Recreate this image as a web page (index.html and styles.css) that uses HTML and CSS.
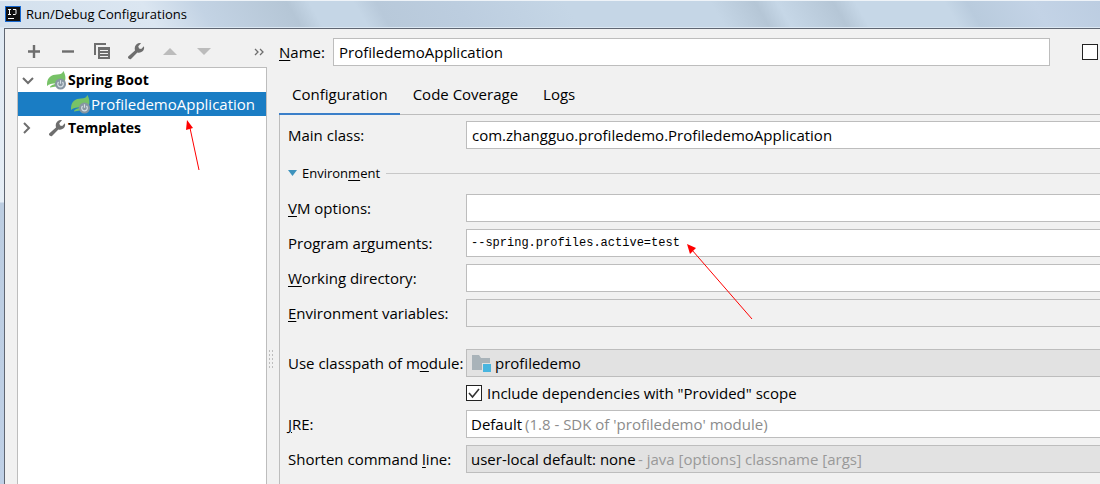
FILE: index.html
```html
<!DOCTYPE html>
<html lang="en">
<head>
<meta charset="utf-8">
<title>Run/Debug Configurations</title>
<link rel="stylesheet" href="styles.css">
</head>
<body>
<svg class="defs" aria-hidden="true">
  <symbol id="wrench" viewBox="0 0 18 18"><path d="M1.2 14.6 8 8.4C7.3 5.800 8 3.600 9.600 2.300 11 1.100 12.600.900 14 1.300L11.300 4.200 12 6.400 14.200 7 16.900 4.200C17.500 6.200 17 8 15.600 9.300 14 10.700 12 10.900 10.400 10.400L4 16.900C2.500 17.900.200 16 1.200 14.600Z" fill="#6e6e6e"/></symbol>
  <symbol id="spring" viewBox="0 0 20 20"><path class="leaf" d="M0 16C-.5 8 4 4.500 10 4.500 13.500 4.500 15.500 3.500 16.500 1 18.500 5 18.800 8 18 11L12 16 3 17.500C3 15.500 6 14.800 9 13.500 5 13.500 2 14 0 16Z"/><circle cx="13.500" cy="14" r="5.500" fill="#8796a1"/><path d="M11.600 12a2.800 2.800 0 1 0 3.800 0M13.500 10.300v3.400" fill="none" stroke="#d4dde3" stroke-width="1.200"/></symbol>
</svg>
<header class="titlebar">
  <svg class="app-icon" width="16" height="16" viewBox="0 0 16 16" aria-hidden="true"><rect x=".5" y=".5" width="15" height="15" fill="#111" stroke="#1769d2"/><path d="M3 3.500h3M4.500 3.500v5M3 8.500h3M8 3.500h3v4q0 1-1 1H8M3 12.500h6" fill="none" stroke="#fff"/></svg>
  <h1 class="title">Run/Debug Configurations</h1>
</header>
<main class="frame">
  <aside class="sidebar">
    <div class="toolbar">
      <button class="tool" aria-label="Add"><svg width="18" height="18"><path d="M9 3v13M3 9.500h12" stroke="#6e6e6e" stroke-width="2.400"/></svg></button>
      <button class="tool" aria-label="Remove"><svg width="18" height="18"><path d="M3 9.500h12" stroke="#6e6e6e" stroke-width="2.400"/></svg></button>
      <button class="tool" aria-label="Copy"><svg width="18" height="18"><path d="M2 13V2h11" fill="none" stroke="#6e6e6e" stroke-width="2"/><path d="M5 5h12v12H5z" fill="#6e6e6e"/><path d="M7 8.500h8M7 11.500h8M7 14.500h8" stroke="#f1f1f1"/></svg></button>
      <button class="tool" aria-label="Edit templates"><svg width="18" height="18"><use href="#wrench"/></svg></button>
      <button class="tool" aria-label="Move up" disabled><svg width="18" height="18"><path d="M9 6l7 7H2z" fill="#bcbcbc"/></svg></button>
      <button class="tool" aria-label="Move down" disabled><svg width="18" height="18"><path d="M9 13l7-7H2z" fill="#bcbcbc"/></svg></button>
      <button class="tool more" aria-label="More"><svg width="18" height="18"><path d="M6 7l3 3-3 3M11 7l3 3-3 3" fill="none" stroke="#6e6e6e" stroke-width="1.300"/></svg></button>
    </div>
    <ul class="tree">
      <li class="node"><svg class="chevron" width="12" height="12"><path d="M1 4l5 5 5-5" /></svg><svg class="node-icon" width="20" height="20"><use href="#spring"/></svg><b>Spring Boot</b></li>
      <li class="node child selected"><svg class="node-icon" width="20" height="20"><use href="#spring"/></svg><span>ProfiledemoApplication</span></li>
      <li class="node"><svg class="chevron" width="12" height="12"><path d="M2 1l5 5-5 5"/></svg><svg class="node-icon" width="20" height="20" viewBox="-1 -1 20 20"><use href="#wrench" width="18" height="18"/></svg><b>Templates</b></li>
    </ul>
  </aside>
  <div class="splitter"></div>
  <section class="editor">
    <div class="name-row">
      <label class="name-label" for="name"><u>N</u>ame:</label>
      <input class="field" id="name" type="text" value="ProfiledemoApplication">
      <input class="check" type="checkbox" aria-label="Share">
    </div>
    <div class="tabs" role="tablist">
      <button class="tab active" role="tab" aria-selected="true">Configuration</button>
      <button class="tab" role="tab">Code Coverage</button>
      <button class="tab" role="tab">Logs</button>
    </div>
    <form class="form">
      <label for="main">Main class:</label>
      <input class="field" id="main" type="text" value="com.zhangguo.profiledemo.ProfiledemoApplication">
      <div class="group"><svg width="10" height="8" aria-hidden="true"><path d="M0 1h9L4.500 7z" fill="#3e93bd"/></svg><span>Environ<u>m</u>ent</span></div>
      <label for="vm"><u>V</u>M options:</label>
      <input class="field" id="vm" type="text">
      <label for="args">Program a<u>r</u>guments:</label>
      <input class="field mono" id="args" type="text" value="--spring.profiles.active=test">
      <label for="dir"><u>W</u>orking directory:</label>
      <input class="field" id="dir" type="text">
      <label for="env"><u>E</u>nvironment variables:</label>
      <input class="field readonly" id="env" type="text" readonly>
      <label class="spaced" for="module">Use classpath of m<u>o</u>dule:</label>
      <div class="combo spaced">
        <select class="field gray with-icon" id="module"><option>profiledemo</option></select>
        <svg class="folder" width="20" height="18" aria-hidden="true"><path d="M0 1h7l2 3h9v12H0z" fill="#a9b3b9"/><path d="M10 9h10v9H10z" fill="#e2e2e2"/><path d="M11 10h8v8h-8z" fill="#48b5df"/></svg>
      </div>
      <div class="option"><input class="check" type="checkbox" id="provided" checked><label for="provided">Include dependencies with "Provided" scope</label></div>
      <label for="jre"><u>J</u>RE:</label>
      <div class="combo">
        <select class="field" id="jre"><option>Default</option></select>
        <span class="hint jre-hint">(1.8 - SDK of 'profiledemo' module)</span>
      </div>
      <label for="shorten">Shorten command <u>l</u>ine:</label>
      <div class="combo">
        <select class="field gray" id="shorten"><option>user-local default: none</option></select>
        <span class="hint shorten-hint">- java [options] classname [args]</span>
      </div>
    </form>
  </section>
</main>
<svg class="arrow to-node" width="16" height="52" aria-hidden="true"><path d="M3 8l9 42" stroke="#f00" fill="none"/><path d="M0 0l6 8-7 2z" fill="#f00"/></svg>
<svg class="arrow to-args" width="68" height="78" aria-hidden="true"><path d="M5 6l60 69" stroke="#f00" fill="none"/><path d="M0 0l9 4-6 6z" fill="#f00"/></svg>
</body>
</html>
```
FILE: styles.css
```css
* { box-sizing: border-box; }
body {
  margin: 0;
  min-height: 100vh;
  display: flex;
  flex-direction: column;
  overflow: hidden;
  background: linear-gradient(#dfe9f3 0, #e6eef6 202px, #bccde1 203px, #bfd0e6 100%);
  font: 15px/20px "Open Sans", "Noto Sans", sans-serif;
  color: #000;
}
button, input, select { font: inherit; color: inherit; margin: 0; }
u { text-underline-offset: 2px; }
.defs { position: absolute; width: 0; height: 0; }
.titlebar {
  height: 28px;
  display: flex;
  align-items: center;
  gap: 5px;
  padding-left: 5px;
  border-top: 1px solid #eef3f8;
  border-bottom: 1px solid #dce8f3;
  background: linear-gradient(60deg, #d3e0ed 0, #dbe6f1 14%, #c3d3e4 19%, #b5c6d6 27%, #c5d6e6 29%, #c5d6e6 33%, #b8c9da 35%, #bccddf 42%, #c5d6e6 52%, #c5d6e6 65%, #b5c6d6 69%, #c6d7e7 71%, #b5c6d6 76%, #c6d7e7 78%, #c6d7e7 86%, #b9cbdd 88%, #c3d3e6 94%, #bccde1 100%);
}
.title { margin: 0; font-size: 13px; font-weight: 400; line-height: 20px; }
.frame {
  flex: 1;
  display: flex;
  margin-left: 4px;
  border-top: 1px solid #5f6672;
  border-left: 1px solid #5f6672;
  background: #f1f1f1;
}
.sidebar { width: 262px; padding-left: 12px; display: flex; flex-direction: column; }
.toolbar { height: 38px; display: flex; align-items: center; gap: 16px; padding: 6px 0 0 8px; }
.tool { width: 18px; height: 18px; padding: 0; border: 0; background: none; }
.tool svg { display: block; }
.more { margin-left: auto; }
.tree { flex: 1; margin: 0; padding: 0; list-style: none; background: #fff; border: 1px solid #bdbdbd; border-bottom: 0; }
.node { height: 24px; display: flex; align-items: center; padding-left: 4px; }
.node b { margin-left: 1px; font-size: 14px; }
.chevron { margin-right: 13px; fill: none; stroke: #6e6e6e; stroke-width: 2; }
.leaf { fill: #77c267; }
.child { padding-left: 53px; }
.selected { background: #1a7dc4; color: #fff; }
.selected .leaf { fill: #5aad5d; }
.splitter {
  width: 12px;
  height: 339px;
  padding: 320px 5px 0 1px;
  background: radial-gradient(circle, #bdbdbd 1px, transparent 1px) 1px 320px / 3px 4px;
  background-clip: content-box;
}
.editor { flex: 1; min-width: 0; display: flex; flex-direction: column; }
.name-row { display: flex; align-items: center; padding: 9px 2px 0 0; }
.name-label { width: 54px; }
.name-row .field { flex: 1; margin-right: 32px; }
.field { display: block; width: 100%; min-width: 0; height: 28px; padding: 0 5px; border: 1px solid #bdbdbd; border-radius: 0; background: #fff; outline: 0; }
.check { appearance: none; flex: none; width: 16px; height: 16px; border: 1px solid #222; background: #fff; }
.check:checked { background: #fff url("data:image/svg+xml,%3Csvg xmlns='http://www.w3.org/2000/svg' width='14' height='14'%3E%3Cpath d='M2 7l3.500 4L12 3' fill='none' stroke='%23333' stroke-width='1.600'/%3E%3C/svg%3E"); }
.tabs { display: flex; margin-top: 9px; height: 40px; border-bottom: 1px solid #bdbdbd; }
.tab { height: 40px; padding: 0 12px 0 13px; border: 0; border-bottom: 2px solid transparent; background: none; }
.active { border-color: #3b7fc9; }
.form {
  flex: 1;
  display: grid;
  grid-template-columns: 178px minmax(0, 1fr);
  gap: 7px 0;
  align-content: start;
  align-items: center;
  padding: 6px 0 10px 8px;
  border-left: 1px solid #bdbdbd;
}
.form .field { border-right: 0; }
.form .mono { padding-left: 4px; font: 12px/20px "Liberation Mono", monospace; }
.form .readonly { background: #f1f1f1; }
.form .gray { background: #e2e2e2; }
.group { grid-column: 1 / -1; height: 31px; padding-top: 3px; display: flex; align-items: center; gap: 4px; font-size: 13px; }
.group::after { content: ""; flex: 1; height: 1px; margin-left: 2px; background: #c8c8c8; }
.spaced { margin-top: 15px; }
.combo { display: grid; align-items: center; }
.combo > * { grid-area: 1 / 1; }
.combo select { appearance: none; padding: 0 4px; }
.combo .with-icon { padding-left: 28px; }
.folder { margin-left: 6px; pointer-events: none; }
.hint { color: #8c8c8c; pointer-events: none; white-space: nowrap; }
.jre-hint { margin-left: 59px; }
.shorten-hint { margin-left: 172px; color: #999; }
.option { grid-column: 2; height: 19px; padding-bottom: 2px; display: flex; align-items: center; gap: 5px; }
.arrow { position: absolute; overflow: visible; }
.to-node { left: 187px; top: 120px; }
.to-args { left: 687px; top: 244px; }
```
